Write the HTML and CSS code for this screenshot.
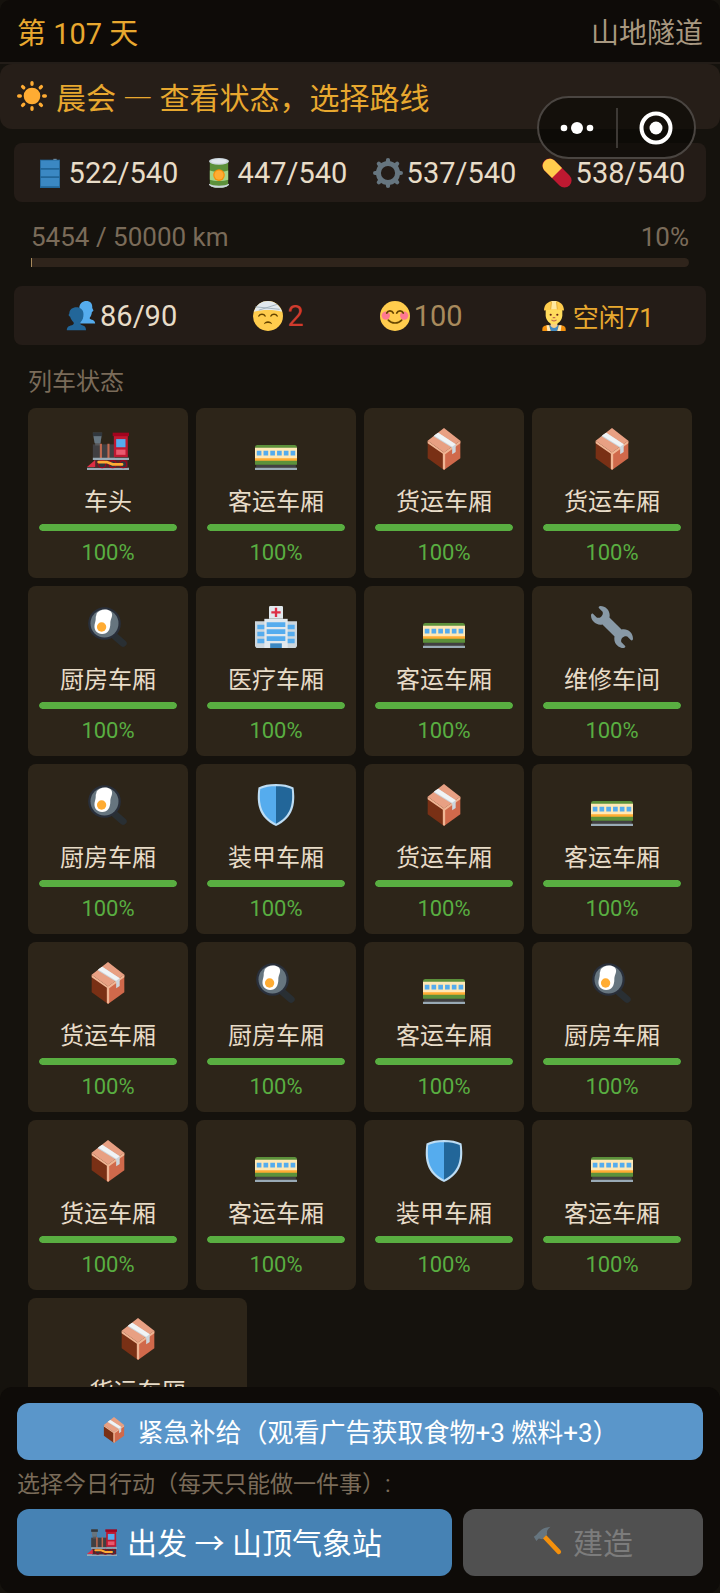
FILE: index.html
```html
<!DOCTYPE html>
<html lang="zh-CN">
<head>
    <meta charset="UTF-8">
    <meta name="viewport" content="width=device-width, initial-scale=1.0">
    <title>第 107 天 - 山地隧道</title>
    <link rel="stylesheet" href="styles.css">
</head>
<body>
    <!-- 图标库 -->
    <svg class="icon-defs" aria-hidden="true">
        <symbol id="icon-sun" viewBox="0 0 36 36">
            <circle cx="18" cy="18" r="10" fill="#ffac33"/>
            <path d="M18 2v2M18 32v2M2 18h2M32 18h2M6.700 6.700l1.400 1.400M27.900 27.900l1.400 1.400M29.300 6.700l-1.400 1.400M8.100 27.900l-1.400 1.400" stroke="#ffac33" stroke-width="4" stroke-linecap="round"/>
        </symbol>
        <symbol id="icon-fuel" viewBox="0 0 36 36">
            <path d="M22 1h4v2h-4z" fill="#8899a6"/>
            <path d="M6 2h24v34H6z" fill="#226699"/>
            <path d="M7 3h22v9H7zM7 14h22v8H7zM7 24h22v10H7z" fill="#3b88c3"/>
        </symbol>
        <symbol id="icon-food" viewBox="0 0 36 36">
            <path d="M7 4h22v28c0 5-22 5-22 0z" fill="#5c913b"/>
            <path d="M7 15c5 2 17 2 22 0v11c-5 2-17 2-22 0z" fill="#a6d388"/>
            <path d="M6 31c4 3 20 3 24 0v1c-3 5-21 5-24 0z" fill="#ccd6dd"/>
            <ellipse cx="18" cy="4" rx="12" ry="4" fill="#ccd6dd"/>
            <ellipse cx="18" cy="4" rx="9.500" ry="2.500" fill="#e1e8ed"/>
            <circle cx="18" cy="20.500" r="7" fill="#f4900c"/>
            <circle cx="18" cy="20.500" r="5.500" fill="#ffac33"/>
        </symbol>
        <symbol id="icon-gear" viewBox="0 0 36 36">
            <circle cx="18" cy="18" r="11.500" fill="none" stroke="#66757f" stroke-width="6"/>
            <path d="M18 2.500v4M18 29.500v4M2.500 18h4M29.500 18h4M7 7l3 3M26 26l3 3M29 7l-3 3M10 26l-3 3" stroke="#66757f" stroke-width="5" stroke-linecap="round"/>
        </symbol>
        <symbol id="icon-pill" viewBox="0 0 36 36">
            <path d="M9 9l18 18" stroke="#be1931" stroke-width="17" stroke-linecap="round"/>
            <path d="M24 12L12 24 3 15C-4 7 7-4 15 3z" fill="#ffcc4d"/>
        </symbol>
        <symbol id="icon-people" viewBox="0 0 36 36">
            <path d="M35 27c0-4-3-4-6-5.500-1-1-.5-2 .5-3 1-1.500 1.500-3.500 1.500-5l2-2-1.500-3C32 3 29 0 24.500 0S16 3 16 8.500c0 4 1.500 7 3.500 9.500 1 2 0 3.500-2 4.500-3 1-5 1-5 4.500z" fill="#55acee"/>
            <path d="M1 35c0-4 2-5 6-6 2-.5 3-2 2-3.500-2-2-3.500-4-4-6.500C2.500 18 3 16 4 15c0-5 4-7.500 8.500-7.500S21 10 21 16c0 4-1 7-3.500 9.500-1 2 0 3 2 3.500 3 1 4.500 2 4.500 6z" fill="#226699"/>
        </symbol>
        <symbol id="icon-hurt" viewBox="0 0 36 36">
            <circle cx="18" cy="18" r="18" fill="#ffcc4d"/>
            <path d="M1 13C4 4 10 0 18 0s14 5 17 13c-9-3-25-3-34 0z" fill="#e1e8ed"/>
            <path d="M3 7l29 3M7 11l22-7" stroke="#99aab5" stroke-width="1"/>
            <path d="M7 18c1.500-3 6-3 7.500 0M21.500 18c1.500-3 6-3 7.500 0" fill="none" stroke="#664500" stroke-width="1.800" stroke-linecap="round"/>
            <path d="M13 28c1-5 9-5 10 0-3-2-7-2-10 0z" fill="#664500"/>
        </symbol>
        <symbol id="icon-smile" viewBox="0 0 36 36">
            <circle cx="18" cy="18" r="18" fill="#ffcc4d"/>
            <circle cx="7" cy="17.500" r="5" fill="#ff7892"/>
            <circle cx="29" cy="17.500" r="5" fill="#ff7892"/>
            <path d="M8 14.500c1.500-3.500 6.500-3.500 8 0M20 14.500c1.500-3.500 6.500-3.500 8 0M10 23c4 4.500 12 4.500 16 0" fill="none" stroke="#664500" stroke-width="2" stroke-linecap="round"/>
        </symbol>
        <symbol id="icon-worker" viewBox="0 0 36 36">
            <path d="M4 36v-2c0-4 3-5 7-5h14c4 0 7 1 7 5v2z" fill="#f4900c"/>
            <path d="M12 29h12l-2 7h-8z" fill="#4289c1"/>
            <path d="M9 29h3l2 7h-4zM27 29h-3l-2 7h4z" fill="#ffe8b6"/>
            <path d="M14 23h8v7c-2 3-6 3-8 0z" fill="#f7d089"/>
            <path d="M8 9h20v8c0 6-5 11-10 11S8 23 8 17z" fill="#ffdc5d"/>
            <circle cx="14" cy="16.500" r="1.300" fill="#662113"/>
            <circle cx="22" cy="16.500" r="1.300" fill="#662113"/>
            <path d="M15.500 23c1.500 1 3.500 1 5 0M17 20h2" fill="none" stroke="#c1694f" stroke-width="1.400" stroke-linecap="round"/>
            <path d="M6 11.500C6 4 11 0 18 0s12 4 12 11.500c-6-1.500-18-1.500-24 0z" fill="#ffcc4d"/>
            <path d="M15 0h6l1 10h-8z" fill="#ffe8a0"/>
            <path d="M14 10l1-9M22 10l-1-9" stroke="#e0a52c" stroke-width="1"/>
        </symbol>
        <symbol id="icon-engine" viewBox="0 0 36 36">
            <path d="M0 34h36v2H0z" fill="#99aab5"/>
            <path d="M5 14h19v12H5z" fill="#414042"/>
            <path d="M7 7h4.500v8H7z" fill="#58595b"/>
            <path d="M5 4h8l-1.500 9h-5z" fill="#66757f"/>
            <path d="M5 4h8v3H5z" fill="#31373d"/>
            <path d="M11 13.500h1.800V26H11zM17.500 13.500h1.800V26h-1.800z" fill="#c1694f"/>
            <path d="M23 5h12v20H23z" fill="#be1931"/>
            <path d="M22 4h14v3H22z" fill="#a0041e"/>
            <path d="M25 9.500h8v7h-8z" fill="#55acee"/>
            <path d="M25 18.500h8V23h-8z" fill="#ea596e"/>
            <path d="M5 25.500h31v2H5z" fill="#99aab5"/>
            <path d="M6 27.500h29V34H6z" fill="#50282a"/>
            <path d="M0 33.500l7-6v6z" fill="#dd2e44"/>
            <circle cx="13" cy="31" r="3" fill="#31373d" stroke="#a0041e"/>
            <circle cx="22" cy="31" r="3" fill="#31373d" stroke="#a0041e"/>
            <circle cx="31" cy="31" r="3" fill="#31373d" stroke="#a0041e"/>
            <path d="M10 29.200h7l5 2h8" fill="none" stroke="#ffac33" stroke-width="2.400" stroke-linecap="round"/>
        </symbol>
        <symbol id="icon-coach" viewBox="0 0 36 36">
            <path d="M1 31h34v3H1z" fill="#414042"/>
            <path d="M0 34h36v2H0z" fill="#99aab5"/>
            <path d="M0 17c0-2 1-2.500 2-2.500h32c1 0 2 .5 2 2.500v14.500H0z" fill="#5c913b"/>
            <path d="M0 17h36v9.500H0z" fill="#ffe8b6"/>
            <path d="M0 26h36v2H0z" fill="#ffac33"/>
            <path d="M1.500 19.500h4v4h-4zM7.300 19.500h4v4h-4zM13.100 19.500h4v4h-4zM18.900 19.500h4v4h-4zM24.700 19.500h4v4h-4zM30.500 19.500h4v4h-4z" fill="#55acee"/>
        </symbol>
        <symbol id="icon-box" viewBox="0 0 36 36">
            <path d="M4 11l14 10v15L4 26z" fill="#793015"/>
            <path d="M32 11L18 21v15l14-10z" fill="#d0694b"/>
            <path d="M18 0l14 11-14 10L4 11z" fill="#e8a083"/>
            <path d="M18 21l14-10v2L19 22.500V35l-1 1-1-1V22L4 13v-2z" fill="#f0b594"/>
            <path d="M13 4l15 10v6.500l-3 2V17L9 7z" fill="#ccd6dd"/>
            <path d="M13 4l15 10-3 2L9.500 6.500z" fill="#f0f4f6"/>
        </symbol>
        <symbol id="icon-kitchen" viewBox="0 0 36 36">
            <path d="M24 26l7 6" stroke="#292f33" stroke-width="6" stroke-linecap="round"/>
            <circle cx="15" cy="15" r="14" fill="#292f3a"/>
            <circle cx="15" cy="15" r="12" fill="#66757f"/>
            <path d="M11 4c4-2 10-1 10.500 3 .2 3-1.500 4-1.500 8 0 5-2 9-7 9-5 0-8-4-6-10 1-3 0-4 1-6 0-2 1-3 3-4z" fill="#fff"/>
            <circle cx="12.500" cy="18" r="4" fill="#ffac33"/>
        </symbol>
        <symbol id="icon-hospital" viewBox="0 0 36 36">
            <path d="M0 13h36v21c0 1-1 2-2 2H2c-1 0-2-1-2-2z" fill="#ccd6dd"/>
            <path d="M8 11h20v25H8z" fill="#e1e8ed"/>
            <path d="M12 1c0-1 1-1 1-1h10c1 0 1 1 1 1v10H12z" fill="#e1e8ed"/>
            <path d="M18 1.500v8M14 5.500h8" stroke="#dd2e44" stroke-width="2"/>
            <path d="M10 14h16v4H10zM10 20h16v4H10zM10 26h16v4H10zM2 16h6v4H2zM2 22h6v4H2zM2 28h6v4H2zM28 16h6v4h-6zM28 22h6v4h-6zM28 28h6v4h-6z" fill="#55acee"/>
            <path d="M13 32h10v4H13z" fill="#3b88c3"/>
        </symbol>
        <symbol id="icon-wrench" viewBox="0 0 36 36">
            <path d="M27.989 19.977c-.622 0-1.225.078-1.806.213L15.811 9.818c.134-.581.212-1.184.212-1.806C16.023 3.587 12.436 0 8.012 0 7.110 0 5.910.916 6.909 1.915l2.997 2.997s.999 1.998-.999 3.995-3.996.998-3.996.998L1.915 6.909C.916 5.910 0 7.105 0 8.012c0 4.425 3.587 8.012 8.012 8.012.622 0 1.225-.078 1.806-.212l10.371 10.371c-.135.581-.213 1.184-.213 1.806 0 4.425 3.588 8.011 8.012 8.011.901 0 2.101-.916 1.102-1.915l-2.997-2.997s-.999-1.998.999-3.995 3.995-.999 3.995-.999l2.997 2.997c1 .999 1.916-.196 1.916-1.102 0-4.425-3.587-8.012-8.011-8.012z" fill="#8899a6"/>
        </symbol>
        <symbol id="icon-shield" viewBox="0 0 36 36">
            <path d="M18 0c6 0 11 1 15 3 2 14 0 26-15 33C3 29 1 17 3 3c4-2 9-3 15-3z" fill="#bdddf4"/>
            <path d="M18 2v32C6 28 3 18 4.500 4.300 8.500 2.500 13 2 18 2z" fill="#55acee"/>
            <path d="M18 2v32c12-6 15-16 13.500-29.700C27.500 2.500 23 2 18 2z" fill="#226699"/>
        </symbol>
        <symbol id="icon-hammer" viewBox="0 0 36 36">
            <path d="M14 13l17 18" stroke="#f4900c" stroke-width="5.500" stroke-linecap="round"/>
            <path d="M1 13C6 10 8 4 15 2l6-1c-4 3-5 6-4 9l-6 6-4-1-3 3z" fill="#66757f"/>
        </symbol>
    </svg>

    <header class="top-bar">
        <h1 class="day">第 107 天</h1>
        <span class="location">山地隧道</span>
    </header>

    <div class="phase-bar">
        <svg class="icon" aria-hidden="true"><use href="#icon-sun"/></svg>
        <span>晨会 — 查看状态，选择路线</span>
    </div>

    <div class="capsule">
        <button class="capsule-btn" aria-label="更多">
            <svg width="36" height="14" viewBox="0 0 36 14"><g fill="#fff"><circle cx="5" cy="7" r="3.300"/><circle cx="18" cy="7" r="6"/><circle cx="31" cy="7" r="3.300"/></g></svg>
        </button>
        <button class="capsule-btn" aria-label="关闭">
            <svg width="34" height="34" viewBox="0 0 34 34"><circle cx="17" cy="17" r="14.500" fill="none" stroke="#fff" stroke-width="4"/><circle cx="17" cy="17" r="6.500" fill="#fff"/></svg>
        </button>
    </div>

    <main class="content">
        <section class="stat-bar resources">
            <div class="stat"><svg class="icon" aria-hidden="true"><use href="#icon-fuel"/></svg><span>522/540</span></div>
            <div class="stat"><svg class="icon" aria-hidden="true"><use href="#icon-food"/></svg><span>447/540</span></div>
            <div class="stat"><svg class="icon" aria-hidden="true"><use href="#icon-gear"/></svg><span>537/540</span></div>
            <div class="stat"><svg class="icon" aria-hidden="true"><use href="#icon-pill"/></svg><span>538/540</span></div>
        </section>

        <section class="journey">
            <div class="journey-text">
                <span>5454 / 50000 km</span>
                <span>10%</span>
            </div>
            <div class="journey-track"><div class="journey-fill"></div></div>
        </section>

        <section class="stat-bar crew">
            <div class="stat"><svg class="icon" aria-hidden="true"><use href="#icon-people"/></svg><span>86/90</span></div>
            <div class="stat hurt"><svg class="icon" aria-hidden="true"><use href="#icon-hurt"/></svg><span>2</span></div>
            <div class="stat morale"><svg class="icon" aria-hidden="true"><use href="#icon-smile"/></svg><span>100</span></div>
            <div class="stat idle"><svg class="icon" aria-hidden="true"><use href="#icon-worker"/></svg><span>空闲71</span></div>
        </section>

        <section class="train">
            <h2 class="train-title">列车状态</h2>
            <div class="car-list" id="carList"></div>
        </section>
    </main>

    <footer class="action-bar">
        <button class="btn supply-btn"><svg class="icon" aria-hidden="true"><use href="#icon-box"/></svg><span>紧急补给（观看广告获取食物+3 燃料+3）</span></button>
        <p class="action-hint">选择今日行动（每天只能做一件事）:</p>
        <div class="action-row">
            <button class="btn depart-btn"><svg class="icon" aria-hidden="true"><use href="#icon-engine"/></svg><span>出发 → 山顶气象站</span></button>
            <button class="btn build-btn" disabled><svg class="icon" aria-hidden="true"><use href="#icon-hammer"/></svg><span>建造</span></button>
        </div>
    </footer>

    <script>
        // 车厢类型
        const carTypes = {
            engine: { name: "车头", icon: "icon-engine" },
            coach: { name: "客运车厢", icon: "icon-coach" },
            cargo: { name: "货运车厢", icon: "icon-box" },
            kitchen: { name: "厨房车厢", icon: "icon-kitchen" },
            medical: { name: "医疗车厢", icon: "icon-hospital" },
            repair: { name: "维修车间", icon: "icon-wrench" },
            armor: { name: "装甲车厢", icon: "icon-shield" }
        };

        // 当前列车编组
        const train = [
            "engine", "coach", "cargo", "cargo",
            "kitchen", "medical", "coach", "repair",
            "kitchen", "armor", "cargo", "coach",
            "cargo", "kitchen", "coach", "kitchen",
            "cargo", "coach", "armor", "coach",
            "cargo"
        ].map(type => ({ type: type, hp: 100 }));

        // 渲染车厢列表
        document.getElementById('carList').innerHTML = train.map(car => {
            const info = carTypes[car.type];
            return `
                <div class="car">
                    <svg class="car-icon" aria-hidden="true"><use href="#${info.icon}"/></svg>
                    <div class="car-name">${info.name}</div>
                    <div class="hp-track"><div class="hp-fill" style="width: ${car.hp}%"></div></div>
                    <div class="hp-text">${car.hp}%</div>
                </div>`;
        }).join('');
    </script>
</body>
</html>
```

FILE: styles.css
```css
* {
    box-sizing: border-box;
}

html {
    background: #000;
}

body {
    font-family: 'Roboto', 'Noto Sans CJK SC', sans-serif;
    background: #15120d;
    color: #e8dcc8;
    margin: 0;
    height: 100vh;
    display: flex;
    flex-direction: column;
    position: relative;
    overflow: hidden;
}

h1, h2, p {
    margin: 0;
    font-weight: 400;
}

button {
    font-family: inherit;
    border: none;
    padding: 0;
    cursor: pointer;
}

.icon-defs {
    display: none;
}

.icon {
    width: 30px;
    height: 30px;
    flex-shrink: 0;
}

.top-bar {
    display: flex;
    justify-content: space-between;
    align-items: center;
    height: 64px;
    padding: 0 17px;
    background: #0e0b08;
    border-bottom: 2px solid #231d18;
    border-radius: 10px 10px 0 0;
    flex-shrink: 0;
}

.day {
    font-size: 29px;
    color: #e8a82f;
}

.location {
    font-size: 28px;
    color: #a89880;
}

.phase-bar {
    display: flex;
    align-items: center;
    gap: 9px;
    height: 65px;
    padding: 0 17px 2px;
    font-family: 'Noto Sans CJK SC', sans-serif;
    font-size: 30px;
    line-height: 40px;
    color: #e8a82f;
    background: #261e18;
    border-radius: 12px;
    flex-shrink: 0;
}

.capsule {
    position: absolute;
    top: 96px;
    right: 24px;
    width: 159px;
    height: 63px;
    display: flex;
    align-items: center;
    background: rgba(8, 6, 4, 0.6);
    border: 2px solid #4a4541;
    border-radius: 32px;
}

.capsule-btn {
    flex: 1;
    height: 40px;
    display: flex;
    align-items: center;
    justify-content: center;
    background: none;
}

.capsule-btn + .capsule-btn {
    border-left: 2px solid #3d3935;
}

.content {
    flex: 1;
    min-height: 0;
    padding: 14px 14px 0;
    overflow-y: auto;
    scrollbar-width: none;
}

.stat-bar {
    display: flex;
    justify-content: space-around;
    align-items: center;
    height: 59px;
    padding: 0 8px;
    background: #241c17;
    border-radius: 8px;
}

.stat {
    display: flex;
    align-items: center;
    gap: 4px;
}

.resources {
    font-size: 29px;
}

.crew {
    padding: 0 14px;
    font-size: 29px;
}

.hurt {
    color: #cf3b2e;
}

.morale {
    color: #a88a5c;
}

.idle {
    font-size: 26px;
    color: #e8a82f;
}

.journey {
    padding: 17px 17px 19px;
}

.journey-text {
    display: flex;
    justify-content: space-between;
    font-size: 26px;
    line-height: 36px;
    color: #7a6b59;
}

.journey-track {
    height: 9px;
    margin-top: 3px;
    background: #2f241b;
    border-radius: 0 5px 5px 0;
    overflow: hidden;
}

.journey-fill {
    width: 1px;
    height: 100%;
    background: #a88a5c;
}

.train {
    padding: 19px 14px 14px;
}

.train-title {
    margin-bottom: 8px;
    font-size: 24px;
    line-height: 36px;
    color: #7a6b59;
}

.car-list {
    display: flex;
    flex-wrap: wrap;
    gap: 8px;
}

.car {
    flex: 1 0 22%;
    max-width: 33%;
    padding: 20px 11px 11px;
    text-align: center;
    background: #2d2519;
    border-radius: 8px;
}

.car-icon {
    display: block;
    width: 42px;
    height: 42px;
    margin: 0 auto 14px;
}

.car-name {
    font-size: 24px;
    line-height: 36px;
}

.hp-track {
    height: 7px;
    margin: 4px 0 8px;
    background: #1a1610;
    border-radius: 4px;
    overflow: hidden;
}

.hp-fill {
    height: 100%;
    background: #59ae41;
    border-radius: 4px;
}

.hp-text {
    font-size: 22px;
    line-height: 28px;
    color: #59ae41;
}

.action-bar {
    padding: 16px 17px 17px;
    background: #0e0b08;
    border-radius: 12px;
    flex-shrink: 0;
}

.btn {
    display: flex;
    justify-content: center;
    align-items: center;
    gap: 10px;
    padding-bottom: 3px;
    color: #fff;
    border-radius: 12px;
}

.supply-btn {
    width: 100%;
    height: 57px;
    font-size: 26px;
    background: #5a96ca;
}

.supply-btn .icon {
    width: 26px;
    height: 26px;
}

.action-hint {
    padding: 7px 0 6px;
    font-size: 23px;
    line-height: 36px;
    color: #7a6b59;
}

.action-row {
    display: flex;
    gap: 11px;
}

.action-row .btn {
    height: 67px;
    font-size: 30px;
}

.depart-btn {
    flex: 29;
    background: #4682b4;
}

.build-btn {
    flex: 16;
    color: #7c7c7c;
    background: #505050;
    cursor: default;
}
```
